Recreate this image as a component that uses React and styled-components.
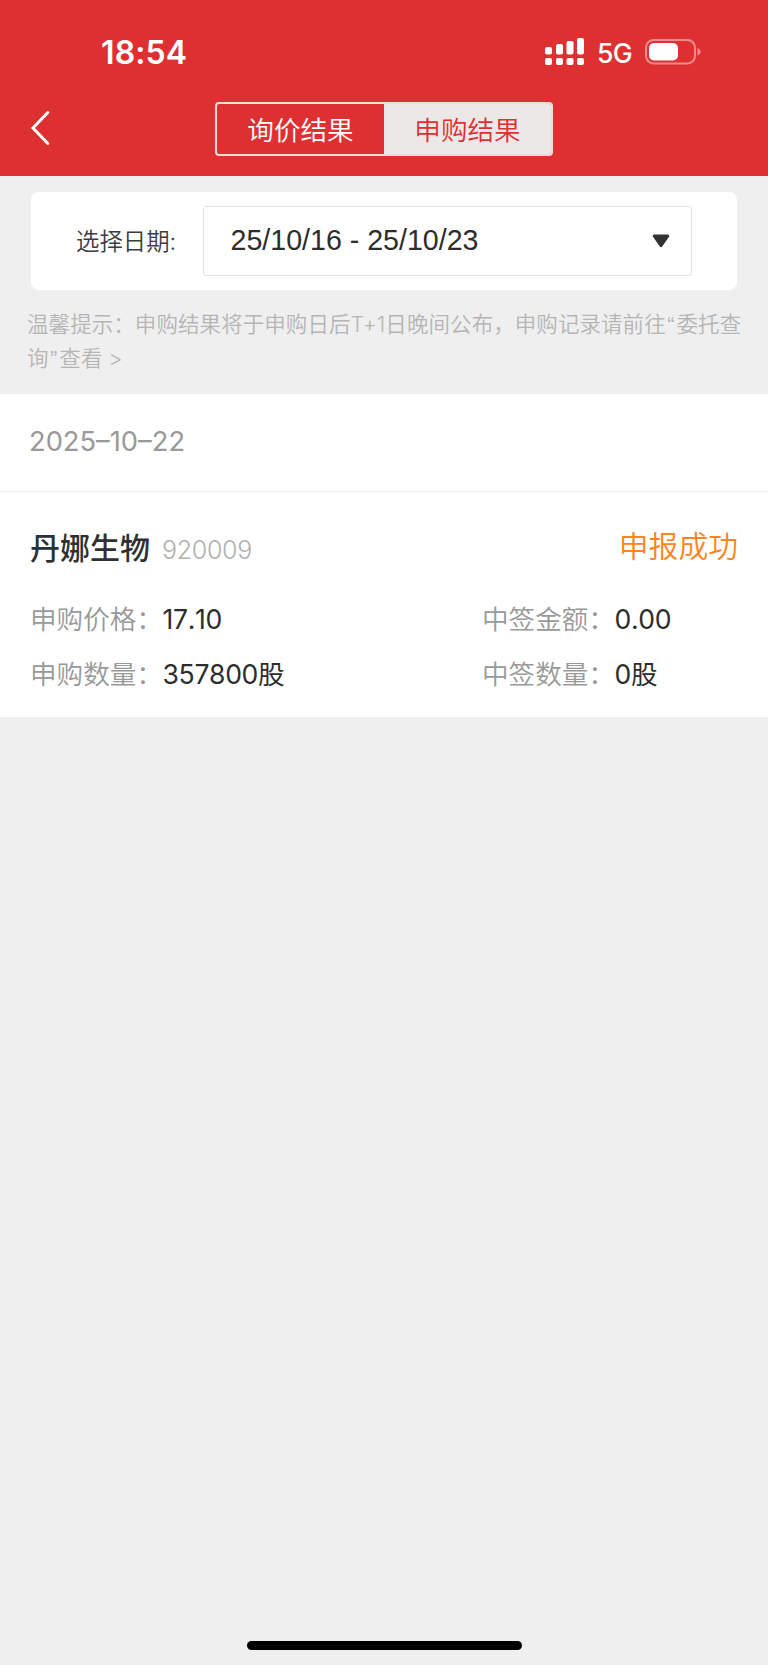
import React, { useState } from "react";
import styled, { createGlobalStyle } from "styled-components";

const GlobalStyle = createGlobalStyle`
  * {
    box-sizing: border-box;
  }
  body {
    margin: 0;
    background: #efefef;
    font-family: Inter, "Noto Sans CJK SC", sans-serif;
    -webkit-font-smoothing: antialiased;
  }
`;

const Page = styled.div`
  display: flex;
  flex-direction: column;
  height: 1665px;
  overflow: hidden;
  background: #efefef;
`;

const Header = styled.header`
  height: 176px;
  background: #df3031;
  color: #fff;
`;

const StatusBar = styled.div`
  display: flex;
  align-items: center;
  height: 102px;
  padding: 4px 67px 0 101px;
`;

const Clock = styled.div`
  flex: 1;
  font-size: 32px;
  font-weight: 600;
  line-height: 40px;
  letter-spacing: 0.1px;
`;

const Signal = styled.svg`
  width: 40px;
  height: 28px;
  margin: -2px 12px 0 0;
`;

const Network = styled.div`
  width: 48px;
  font-size: 26.6px;
  font-weight: 450;
  line-height: 32px;
  letter-spacing: -0.7px;
`;

const Battery = styled.svg`
  width: 56px;
  height: 26px;
  margin-top: -3px;
`;

const NavBar = styled.div`
  display: grid;
  grid-template-columns: 215px 338px 1fr;
  align-items: center;
  height: 54px;
`;

const BackButton = styled.button`
  width: 60px;
  height: 54px;
  padding: 0 0 2px 30px;
  border: 0;
  background: none;
  svg {
    display: block;
  }
`;

const Tabs = styled.div`
  display: flex;
  height: 54px;
  border: 2px solid #f1dcdc;
  border-radius: 4px;
  overflow: hidden;
`;

const Tab = styled.button`
  flex: 1;
  padding: 2px 0 0;
  border: 0;
  font-family: inherit;
  font-size: 26.6px;
  font-weight: 350;
  line-height: 48px;
  background: ${({ $active }) => ($active ? "#ede8e8" : "transparent")};
  color: ${({ $active }) => ($active ? "#df3031" : "#fff")};
`;

const FilterCard = styled.section`
  display: flex;
  align-items: center;
  height: 98px;
  margin: 16px 31px 0;
  padding: 0 45px;
  border-radius: 8px;
  background: #fff;
`;

const FilterLabel = styled.label`
  width: 126.5px;
  padding-bottom: 2px;
  font-size: 23.4px;
  font-weight: 350;
  color: #3c3c3c;
`;

const DateSelect = styled.button`
  display: flex;
  flex: 1;
  align-items: center;
  justify-content: space-between;
  height: 70px;
  padding: 0 21px 1px 27px;
  border: 1px solid #e2e2e2;
  border-radius: 3px;
  background: #fff;
  font-family: "Liberation Sans", Arial, sans-serif;
  font-size: 28.6px;
  color: #2d2d2d;
`;

const Notice = styled.p`
  height: 104px;
  margin: 0;
  padding: 17px 0 0 27px;
  font-size: 21.5px;
  font-weight: 350;
  line-height: 34px;
  letter-spacing: 0.07px;
  color: #b5b5b5;
  white-space: nowrap;
`;

const Quote = styled.span`
  padding: 0 2px 0 1.5px;
  font-family: "Liberation Sans", Arial, sans-serif;
  line-height: 1;
`;

const DateRow = styled.div`
  height: 98px;
  padding: 0 29px;
  border-bottom: 1px solid #eee;
  background: #fff;
  font-size: 27.3px;
  font-weight: 370;
  line-height: 95px;
  color: #999;
`;

const Record = styled.article`
  height: 225px;
  padding: 36px 30px 0;
  background: #fff;
`;

const RecordHead = styled.div`
  display: flex;
  align-items: center;
  height: 40px;
  margin-bottom: 32px;
`;

const StockName = styled.h2`
  margin: 0 12px 0 0;
  font-size: 30px;
  font-weight: 500;
  line-height: 40px;
  color: #303030;
`;

const StockCode = styled.span`
  flex: 1;
  padding-top: 4px;
  font-size: 25px;
  font-weight: 350;
  line-height: 40px;
  letter-spacing: -0.3px;
  color: #b0b0b0;
`;

const Status = styled.span`
  font-size: 29.8px;
  font-weight: 350;
  line-height: 40px;
  margin-top: -4px;
  color: #ff8420;
`;

const Fields = styled.dl`
  display: grid;
  grid-template-columns: 452px 1fr;
  grid-auto-rows: 55.4px;
  margin: 0;
`;

const Field = styled.div`
  display: flex;
  line-height: 40px;
  white-space: nowrap;
`;

const FieldLabel = styled.dt`
  width: 132.5px;
  margin-top: -1px;
  font-size: 26.6px;
  font-weight: 350;
  color: #999;
`;

const FieldValue = styled.dd`
  margin: -1px 0 0;
  font-size: 26.6px;
  font-weight: 370;
  font-kerning: none;
  letter-spacing: -0.35px;
  color: #2d2d2d;
`;

const HomeIndicator = styled.div`
  width: 275px;
  height: 9px;
  margin: auto auto 15px;
  border-radius: 5px;
  background: #000;
`;

const fields = [
  { label: "申购价格：", value: "17.10" },
  { label: "中签金额：", value: "0.00" },
  { label: "申购数量：", value: "357800股" },
  { label: "中签数量：", value: "0股" },
];

const bars = [
  { x: 0, y: 9 },
  { x: 11, y: 6 },
  { x: 21.5, y: 3 },
  { x: 32, y: 0 },
];

const App = () => {
  const [tab, setTab] = useState("申购结果");

  return (
    <Page>
      <GlobalStyle />
      <Header>
        <StatusBar>
          <Clock>18:54</Clock>
          <Signal viewBox="0 0 40 28" fill="#fff">
            {bars.map(({ x, y }) => (
              <g key={x}>
                <rect x={x} y={y} width="7" height={16.5 - y} rx="2" />
                <rect x={x} y="20" width="7" height="7" rx="2" />
              </g>
            ))}
          </Signal>
          <Network>5G</Network>
          <Battery viewBox="0 0 56 26" fill="none">
            <rect x="1" y="1" width="49" height="23.5" rx="7.5" stroke="#ee8b8b" strokeWidth="2" />
            <rect x="4" y="4" width="29" height="17.5" rx="5" fill="#fff" />
            <path d="M52.5 9 Q55.5 10 55.5 12.8 Q55.5 15.5 52.5 16.5Z" fill="#ee8b8b" />
          </Battery>
        </StatusBar>
        <NavBar>
          <BackButton aria-label="返回">
            <svg width="22" height="36" viewBox="0 0 22 36" fill="none">
              <path d="M17.8 2.5 L3 18 L17.8 33.5" stroke="#fff" strokeWidth="3" strokeLinecap="round" />
            </svg>
          </BackButton>
          <Tabs>
            {["询价结果", "申购结果"].map((name) => (
              <Tab key={name} $active={tab === name} onClick={() => setTab(name)}>
                {name}
              </Tab>
            ))}
          </Tabs>
        </NavBar>
      </Header>

      <FilterCard>
        <FilterLabel>选择日期:</FilterLabel>
        <DateSelect>
          25/10/16 - 25/10/23
          <svg width="18" height="14" viewBox="0 0 18 14">
            <path d="M2.2 2 H15.8 L9 11.6Z" fill="#333" stroke="#333" strokeWidth="3" strokeLinejoin="round" />
          </svg>
        </DateSelect>
      </FilterCard>
      <Notice>
        温馨提示：申购结果将于申购日后T+1日晚间公布，申购记录请前往<Quote>“</Quote>委托查
        <br />
        询<Quote>”</Quote>查看 &gt;
      </Notice>

      <DateRow>2025–10–22</DateRow>
      <Record>
        <RecordHead>
          <StockName>丹娜生物</StockName>
          <StockCode>920009</StockCode>
          <Status>申报成功</Status>
        </RecordHead>
        <Fields>
          {fields.map(({ label, value }) => (
            <Field key={label}>
              <FieldLabel>{label}</FieldLabel>
              <FieldValue>{value}</FieldValue>
            </Field>
          ))}
        </Fields>
      </Record>
      <HomeIndicator />
    </Page>
  );
};

export default App;
